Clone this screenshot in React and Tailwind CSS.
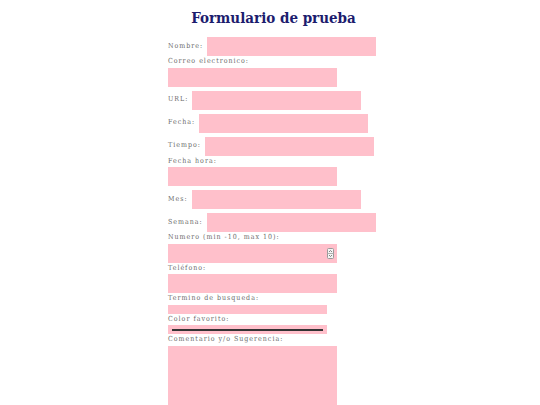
const fields = [
  { label: "Nombre:", kind: "text" },
  { label: "Correo electronico:", kind: "text" },
  { label: "URL:", kind: "text" },
  { label: "Fecha:", kind: "text" },
  { label: "Tiempo:", kind: "text" },
  { label: "Fecha hora:", kind: "text" },
  { label: "Mes:", kind: "text" },
  { label: "Semana:", kind: "text" },
  { label: "Numero (min -10, max 10):", kind: "number" },
  { label: "Teléfono:", kind: "text" },
  { label: "Termino de busqueda:", kind: "search" },
  { label: "Color favorito:", kind: "color" },
];

const Field = ({ label, kind }) => {
  let control;
  if (kind === "number") {
    control = (
      <div className="relative my-[2px] w-[169px] h-[19px] bg-[#ffc0cb]">
        <svg className="absolute right-[3px] top-[4px]" width="7" height="11" viewBox="0 0 7 11">
          <rect x="0.5" y="0.5" width="6" height="10" rx="1" fill="#f4f4f4" stroke="#9a9a9a" />
          <line x1="0.5" y1="5.5" x2="6.5" y2="5.5" stroke="#b0b0b0" />
          <path d="M2 4 L3.5 2.5 L5 4" fill="none" stroke="#666" strokeWidth="0.8" />
          <path d="M2 7 L3.5 8.5 L5 7" fill="none" stroke="#666" strokeWidth="0.8" />
        </svg>
      </div>
    );
  } else if (kind === "search") {
    control = <div className="my-[2px] w-[159px] h-[9px] bg-[#ffc0cb]" />;
  } else if (kind === "color") {
    control = (
      <div className="my-[2px] w-[159px] h-[9px] bg-[#ffc0cb] flex items-center px-[4px]">
        <div className="w-full h-[2px] bg-[#333]" />
      </div>
    );
  } else {
    control = <input type="text" className="my-[2px] w-[169px] h-[19px] bg-[#ffc0cb] outline-none" />;
  }
  return (
    <div className="flex flex-wrap items-center gap-x-[4px]">
      <label className="leading-[7.5px] whitespace-nowrap">{label}</label>
      {control}
    </div>
  );
};

export default function App() {
  return (
    <div
      className="h-[405px] bg-white overflow-hidden font-stretch-condensed"
      style={{ fontFamily: '"DejaVu Serif Condensed", "DejaVu Serif", serif' }}
    >
      <div className="ml-[168px] w-[211px] pt-[8px]">
        <h1 className="text-center font-bold text-[15px] leading-[20px] text-[#1c1c6e]">Formulario de prueba</h1>
        <form className="mt-[7px] text-[7px] tracking-[1px] text-[#6b6b6b]">
          {fields.map((f) => (
            <Field key={f.label} {...f} />
          ))}
          <label className="block leading-[7.5px]">Comentario y/o Sugerencia:</label>
          <textarea className="block my-[2px] w-[169px] h-[80px] bg-[#ffc0cb] resize-none outline-none" />
        </form>
      </div>
    </div>
  );
}
